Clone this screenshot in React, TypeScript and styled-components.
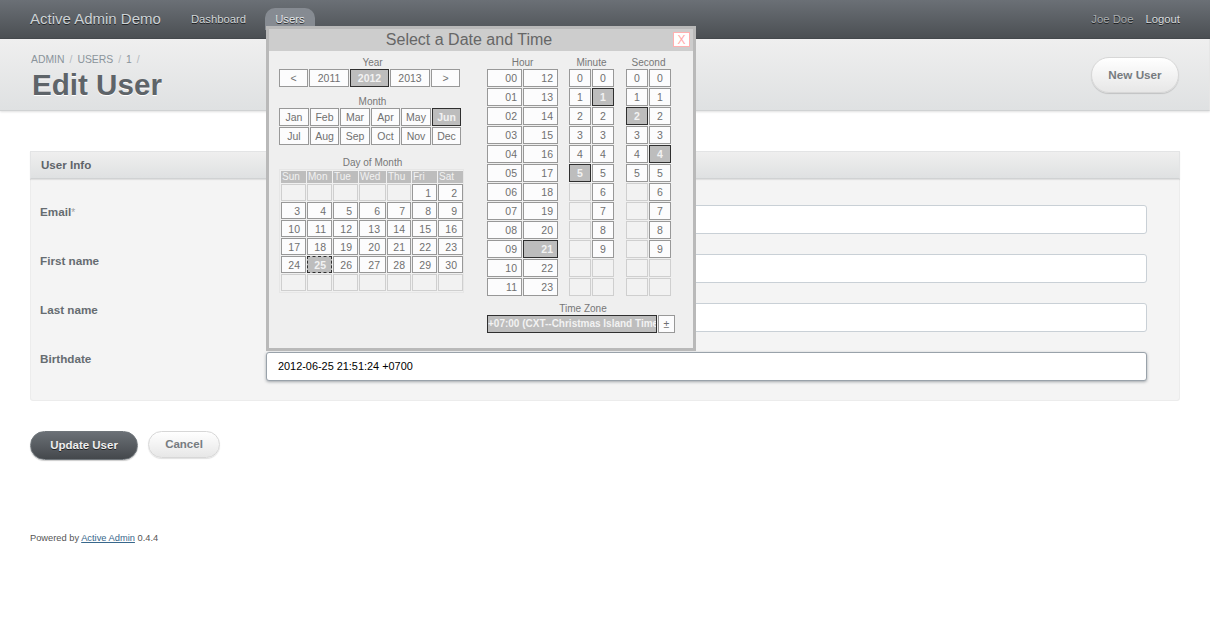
import React from "react";
import styled, { createGlobalStyle } from "styled-components";

const Global = createGlobalStyle`
  html, body { margin: 0; padding: 0; background: #fff; }
  body { font-family: "Liberation Sans", Arial, sans-serif; color: #323537; font-size: 12px; }
`;

const Page = styled.div`
  position: relative;
  width: 1210px;
  height: 639px;
  overflow: hidden;
`;

const TopBar = styled.header`
  height: 39px;
  box-sizing: border-box;
  padding: 0 30px;
  display: flex;
  align-items: center;
  background: linear-gradient(180deg, #6b7076 0%, #4b4f53 100%);
  border-bottom: 1px solid #45494d;
`;

const SiteTitle = styled.div`
  font-size: 15px;
  color: #cdd3d6;
  text-shadow: 0 1px 0 rgba(0, 0, 0, 0.6);
  margin-right: 20px;
  margin-top: -2px;
`;

const NavItem = styled.a<{ $current?: boolean }>`
  font-size: 11.3px;
  color: ${(p) => (p.$current ? "#e4e7e9" : "#d2d6d8")};
  text-shadow: 0 1px 0 rgba(0, 0, 0, 0.7);
  height: 22px;
  line-height: 22px;
  padding: 0 10px;
  border-radius: 10px 10px 0 0;
  background: ${(p) => (p.$current ? "#868b92" : "transparent")};
  margin-right: 9px;
`;

const Spacer = styled.div`
  flex: 1;
`;

const UserName = styled.span`
  font-size: 11.3px;
  color: #a9adb0;
  text-shadow: 0 1px 0 rgba(0, 0, 0, 0.7);
  margin-right: 12px;
`;

const Logout = styled.a`
  font-size: 11.3px;
  color: #d8dcde;
  text-shadow: 0 1px 0 rgba(0, 0, 0, 0.7);
`;

const TitleBar = styled.section`
  height: 72px;
  box-sizing: border-box;
  padding: 14px 31px 0 31px;
  display: flex;
  justify-content: space-between;
  background: linear-gradient(180deg, #efefef 0%, #dfe1e2 100%);
  border-bottom: 1px solid #d0d2d3;
  box-shadow: 0 1px 2px rgba(0, 0, 0, 0.12);
  border-right: 1px solid #e6e6e6;
`;

const Crumbs = styled.nav`
  display: flex;
  gap: 5px;
  font-size: 10.4px;
  color: #8a949b;
  line-height: 13px;
`;

const CrumbSep = styled.span`
  color: #b3b9bd;
`;

const PageTitle = styled.h1`
  margin: 0 0 0 1px;
  font-size: 29.6px;
  line-height: 38px;
  font-weight: bold;
  color: #5e6469;
  text-shadow: 0 1px 0 #fff;
`;

const PillLink = styled.a`
  height: 36px;
  width: 88px;
  box-sizing: border-box;
  margin: 4px -1px 0 0;
  padding-bottom: 2px;
  display: flex;
  align-items: center;
  justify-content: center;
  font-size: 11.7px;
  font-weight: bold;
  color: #777c80;
  border: 1px solid #d7d7d7;
  border-radius: 18px;
  background: linear-gradient(180deg, #ffffff 0%, #e7e7e7 100%);
  box-shadow: 0 1px 1px rgba(0, 0, 0, 0.15);
`;

const Main = styled.main`
  padding: 40px 30px 0;
`;

const Panel = styled.section`
  height: 250px;
  box-sizing: border-box;
  background: #f4f4f4;
  border: 1px solid #ececec;
  border-top: none;
  border-radius: 0 0 3px 3px;
`;

const PanelHead = styled.h3`
  margin: 0 -1px;
  height: 28px;
  box-sizing: border-box;
  padding: 0 0 2px 10px;
  display: flex;
  align-items: center;
  font-size: 11.6px;
  font-weight: bold;
  color: #5e6469;
  background: linear-gradient(180deg, #efefef 0%, #dfe1e2 100%);
  border: 1px solid #e3e4e5;
  border-bottom-color: #d0d2d3;
  box-shadow: 0 1px 1px rgba(0, 0, 0, 0.08);
`;

const Fields = styled.div`
  padding: 26px 32px 0 9px;
  display: flex;
  flex-direction: column;
  gap: 20px;
`;

const FieldRow = styled.div`
  display: flex;
  height: 29px;
`;

const FieldLabel = styled.label`
  width: 226px;
  flex: none;
  font-size: 11.7px;
  font-weight: bold;
  color: #666c71;
  line-height: 14px;
`;

const Required = styled.abbr`
  color: #a0a0a0;
  font-size: 10px;
  font-weight: normal;
`;

const TextBox = styled.div<{ $focus?: boolean }>`
  flex: 1;
  box-sizing: border-box;
  height: 29px;
  padding: 0 0 1px 11px;
  display: flex;
  align-items: center;
  font-size: 10.9px;
  color: #000;
  background: #fff;
  border: 1px solid ${(p) => (p.$focus ? "#99a2aa" : "#c9d0d6")};
  border-radius: 3px;
  box-shadow: ${(p) => (p.$focus ? "0 1px 3px rgba(60,70,80,.45)" : "none")};
`;

const Actions = styled.div`
  margin-top: 30px;
  display: flex;
  align-items: flex-start;
  gap: 10px;
`;

const SubmitButton = styled.button`
  width: 108px;
  height: 29px;
  padding: 0 0 2px;
  font: bold 11.5px "Liberation Sans", Arial, sans-serif;
  color: #efefef;
  text-shadow: 0 1px 0 #222;
  border: 1px solid #6f757a;
  border-radius: 15px;
  background: linear-gradient(180deg, #6b7076 0%, #44484c 100%);
  box-shadow: 0 1px 1px rgba(0, 0, 0, 0.2);
`;

const CancelLink = styled.a`
  width: 72px;
  height: 27px;
  box-sizing: border-box;
  padding-bottom: 2px;
  display: flex;
  align-items: center;
  justify-content: center;
  font-size: 11.5px;
  font-weight: bold;
  color: #777c80;
  border: 1px solid #d7d7d7;
  border-radius: 14px;
  background: linear-gradient(180deg, #ffffff 0%, #e7e7e7 100%);
  box-shadow: 0 1px 1px rgba(0, 0, 0, 0.12);
`;

const Footer = styled.footer`
  margin-top: 72px;
  font-size: 9.3px;
  line-height: 12px;
  color: #555;
`;

const FooterLink = styled.a`
  color: #38678b;
  text-decoration: underline;
`;

/* ---- Date picker overlay ---- */

const Picker = styled.div`
  position: absolute;
  left: 266px;
  top: 26px;
  width: 430px;
  height: 325px;
  box-sizing: border-box;
  border: 3px solid #b9b9b9;
  background: #efefef;
  z-index: 5;
`;

const PickerHead = styled.div`
  position: relative;
  height: 22px;
  padding-right: 24px;
  display: flex;
  align-items: center;
  justify-content: center;
  background: #cdcdcd;
  font-size: 16px;
  color: #666;
`;

const CloseBox = styled.div`
  position: absolute;
  right: 3px;
  top: 3px;
  width: 17px;
  height: 15px;
  box-sizing: border-box;
  display: flex;
  align-items: center;
  justify-content: center;
  font-size: 12px;
  color: #ffa9a9;
  background: #fff;
  border: 1px solid #ffb0b0;
`;

const PickerBody = styled.div`
  display: flex;
  padding: 5px 0 0 10px;
`;

const DateColumn = styled.div`
  width: 208px;
  flex: none;
`;

const TimeColumn = styled.div`
  display: flex;
  flex-direction: column;
`;

const GroupLabel = styled.div<{ $width?: number; $top?: number }>`
  font-size: 10px;
  line-height: 13px;
  height: 13px;
  color: #777;
  text-align: center;
  width: ${(p) => (p.$width ? p.$width + "px" : "auto")};
  margin-top: ${(p) => p.$top ?? 0}px;
`;

const CellRow = styled.div<{ $cols: string }>`
  display: grid;
  grid-template-columns: ${(p) => p.$cols};
  gap: 1px;
  width: max-content;
`;

const Cell = styled.div<{ $on?: boolean; $off?: boolean; $dash?: boolean; $pad?: number; $h?: number }>`
  box-sizing: border-box;
  height: ${(p) => p.$h ?? 18}px;
  display: flex;
  align-items: center;
  justify-content: ${(p) => (p.$pad ? "flex-end" : "center")};
  padding-right: ${(p) => p.$pad ?? 0}px;
  font-size: 10.5px;
  font-weight: ${(p) => (p.$on ? "bold" : "normal")};
  color: ${(p) => (p.$on ? "#f2f2f2" : "#707070")};
  background: ${(p) => (p.$on ? "#bdbdbd" : p.$off ? "#f2f2f2" : "#fcfcfd")};
  border: 1px ${(p) => (p.$dash ? "dashed" : "solid")}
    ${(p) => (p.$on ? "#2f2f2f" : p.$off ? "#cfcfcf" : "#989898")};
`;

const DayTable = styled.div`
  width: 185px;
  box-sizing: border-box;
  padding: 1px;
  border: 1px solid #e6e6e6;
  background: #f0f0f0;
`;

const DayGrid = styled.div`
  display: grid;
  grid-template-columns: 25px 25px 25px 27px 24px 25px 25px;
  gap: 1px;
`;

const DayHead = styled.div`
  height: 12px;
  line-height: 12px;
  background: #bdbdbd;
  color: #f2f2f2;
  font-size: 10px;
  padding-left: 1px;
`;

const TimeGroups = styled.div`
  display: flex;
  gap: 11px;
`;

const TimeGroup = styled.div<{ $left?: number }>`
  display: flex;
  flex-direction: column;
  margin-left: ${(p) => p.$left ?? 0}px;
`;

const ZoneRow = styled.div`
  display: flex;
  gap: 1px;
`;

const ZoneValue = styled.div`
  width: 170px;
  height: 18px;
  box-sizing: border-box;
  overflow: hidden;
  white-space: nowrap;
  line-height: 16px;
  font-size: 10px;
  font-weight: bold;
  color: #f2f2f2;
  background: #bdbdbd;
  border: 1px solid #2f2f2f;
`;

const ZoneButton = styled(Cell)`
  width: 17px;
`;

const years = ["<", "2011", "2012", "2013", ">"];
const months = ["Jan", "Feb", "Mar", "Apr", "May", "Jun", "Jul", "Aug", "Sep", "Oct", "Nov", "Dec"];
const weekdays = ["Sun", "Mon", "Tue", "Wed", "Thu", "Fri", "Sat"];
const days: (number | null)[] = [
  null, null, null, null, null, 1, 2,
  ...Array.from({ length: 28 }, (_, i) => i + 3),
  null, null, null, null, null, null, null,
];
const hourRows = Array.from({ length: 12 }, (_, i) => i);
const pad = (n: number) => String(n).padStart(2, "0");

function DigitGroup({ label, tens, ones, left }: { label: string; tens: number; ones: number; left?: number }) {
  return (
    <TimeGroup $left={left}>
      <GroupLabel>{label}</GroupLabel>
      <CellRow $cols="22px 22px">
        {hourRows.map((r) => (
          <React.Fragment key={r}>
            <Cell $off={r > 5} $on={r === tens}>{r <= 5 ? r : ""}</Cell>
            <Cell $off={r > 9} $on={r === ones}>{r <= 9 ? r : ""}</Cell>
          </React.Fragment>
        ))}
      </CellRow>
    </TimeGroup>
  );
}

function DatePicker() {
  return (
    <Picker>
      <PickerHead>
        Select a Date and Time
        <CloseBox>X</CloseBox>
      </PickerHead>
      <PickerBody>
        <DateColumn>
          <GroupLabel $width={187}>Year</GroupLabel>
          <CellRow $cols="29px 40px 39px 40px 29px">
            {years.map((y) => (
              <Cell key={y} $on={y === "2012"}>{y}</Cell>
            ))}
          </CellRow>
          <GroupLabel $width={187} $top={8}>Month</GroupLabel>
          <CellRow $cols="30px 29px 30px 29px 30px 29px">
            {months.map((m) => (
              <Cell key={m} $on={m === "Jun"}>{m}</Cell>
            ))}
          </CellRow>
          <GroupLabel $width={187} $top={11}>Day of Month</GroupLabel>
          <DayTable>
            <DayGrid>
              {weekdays.map((d) => (
                <DayHead key={d}>{d}</DayHead>
              ))}
              {days.map((d, i) => (
                <Cell key={i} $h={17} $off={d === null} $pad={5} $on={d === 25} $dash={d === 25}>
                  {d ?? ""}
                </Cell>
              ))}
            </DayGrid>
          </DayTable>
        </DateColumn>
        <TimeColumn>
          <TimeGroups>
            <TimeGroup>
              <GroupLabel>Hour</GroupLabel>
              <CellRow $cols="35px 35px">
                {hourRows.map((r) => (
                  <React.Fragment key={r}>
                    <Cell $pad={4}>{pad(r)}</Cell>
                    <Cell $pad={4} $on={r + 12 === 21}>{r + 12}</Cell>
                  </React.Fragment>
                ))}
              </CellRow>
            </TimeGroup>
            <DigitGroup label="Minute" tens={5} ones={1} />
            <DigitGroup label="Second" tens={2} ones={4} left={1} />
          </TimeGroups>
          <GroupLabel $width={192} $top={6}>Time Zone</GroupLabel>
          <ZoneRow>
            <ZoneValue>+07:00 (CXT--Christmas Island Time)</ZoneValue>
            <ZoneButton>±</ZoneButton>
          </ZoneRow>
        </TimeColumn>
      </PickerBody>
    </Picker>
  );
}

const fields = ["First name", "Last name"];

export default function App() {
  return (
    <Page>
      <Global />
      <TopBar>
        <SiteTitle>Active Admin Demo</SiteTitle>
        <NavItem>Dashboard</NavItem>
        <NavItem $current>Users</NavItem>
        <Spacer />
        <UserName>Joe Doe</UserName>
        <Logout>Logout</Logout>
      </TopBar>
      <TitleBar>
        <div>
          <Crumbs>
            <span>ADMIN</span>
            <CrumbSep>/</CrumbSep>
            <span>USERS</span>
            <CrumbSep>/</CrumbSep>
            <span>1</span>
            <CrumbSep>/</CrumbSep>
          </Crumbs>
          <PageTitle>Edit User</PageTitle>
        </div>
        <PillLink>New User</PillLink>
      </TitleBar>
      <Main>
        <Panel>
          <PanelHead>User Info</PanelHead>
          <Fields>
            <FieldRow>
              <FieldLabel>Email<Required>*</Required></FieldLabel>
              <TextBox />
            </FieldRow>
            {fields.map((f) => (
              <FieldRow key={f}>
                <FieldLabel>{f}</FieldLabel>
                <TextBox />
              </FieldRow>
            ))}
            <FieldRow>
              <FieldLabel>Birthdate</FieldLabel>
              <TextBox $focus>2012-06-25 21:51:24 +0700</TextBox>
            </FieldRow>
          </Fields>
        </Panel>
        <Actions>
          <SubmitButton>Update User</SubmitButton>
          <CancelLink>Cancel</CancelLink>
        </Actions>
        <Footer>
          Powered by <FooterLink>Active Admin</FooterLink> 0.4.4
        </Footer>
      </Main>
      <DatePicker />
    </Page>
  );
}
